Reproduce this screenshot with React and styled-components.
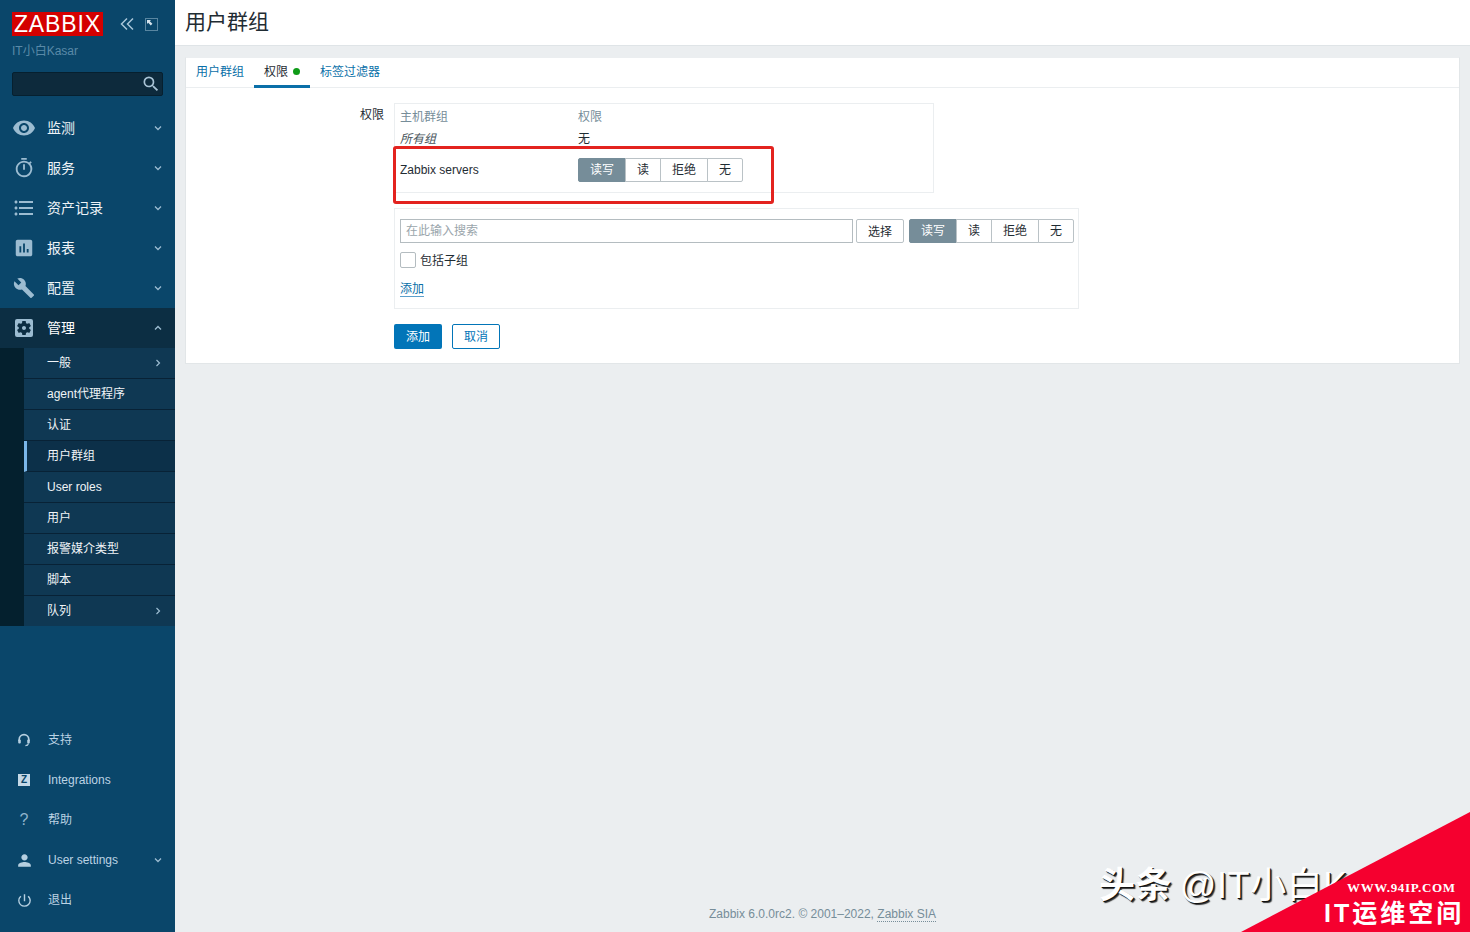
import React from "react";
import styled, { createGlobalStyle } from "styled-components";
import {
  MdVisibility,
  MdOutlineTimer,
  MdFormatListBulleted,
  MdAssessment,
  MdBuild,
  MdSettingsApplications,
  MdPerson,
  MdPowerSettingsNew,
  MdSearch,
} from "react-icons/md";

const FONT = `"Liberation Sans", Arial, "Noto Sans CJK SC", sans-serif`;

const Global = createGlobalStyle`
  html, body { margin: 0; padding: 0; height: 100%; }
  body { font-family: ${FONT}; font-size: 12px; line-height: 14px; color: #1f2c33; background: #ebeef0; overflow: hidden; }
  * { box-sizing: border-box; }
`;

const Page = styled.div`
  position: relative;
  display: flex;
  width: 100%;
  height: 100vh;
  overflow: hidden;
`;

const Sidebar = styled.aside`
  flex: 0 0 175px;
  display: flex;
  flex-direction: column;
  background: #0a466a;
  color: #f2f2f2;
  padding-bottom: 12px;
`;

const Brand = styled.div`
  display: flex;
  align-items: center;
  padding: 12px 0 0 12px;
  height: 36px;
`;

const Logo = styled.div`
  width: 91px;
  height: 24px;
  background: #d40000;
  color: #fff;
  font-size: 23px;
  line-height: 25px;
  text-align: center;
  letter-spacing: 0.9px;
`;

const BrandTools = styled.div`
  display: flex;
  align-items: center;
  gap: 11px;
  margin-left: 17px;
  color: #a9c6d9;
`;

const ServerName = styled.div`
  padding: 8px 0 0 12px;
  height: 24px;
  font-size: 12px;
  line-height: 14px;
  color: #5a8aa8;
`;

const SearchBox = styled.div`
  display: flex;
  align-items: center;
  justify-content: flex-end;
  margin: 12px 12px 12px;
  height: 24px;
  background: #0d2a3c;
  border: 1px solid #06202f;
  border-radius: 2px;
  color: #a9c4d6;
  padding-right: 1px;
  font-size: 20px;
`;

const Nav = styled.nav`
  display: flex;
  flex-direction: column;
`;

const NavRow = styled.div`
  display: flex;
  align-items: center;
  height: 40px;
  flex: 0 0 40px;
  background: ${(p) => (p.$open ? "#0c2e43" : "transparent")};
  color: ${(p) => (p.$open ? "#ffffff" : "#eef3f7")};
  font-size: 14px;
`;

const NavIcon = styled.span`
  flex: 0 0 47px;
  display: flex;
  justify-content: center;
  font-size: 24px;
  color: #9cbcd1;
  svg { display: block; }
`;

const NavText = styled.span`
  flex: 1;
`;

const Chevron = styled.svg`
  width: 8px;
  height: 6px;
  margin-right: 13px;
  fill: none;
  stroke: #9cbcd1;
  stroke-width: 1.3;
`;

const SubWrap = styled.div`
  padding-left: 24px;
  background: #04202e;
`;

const SubRow = styled.div`
  display: flex;
  align-items: center;
  height: 31px;
  padding-left: ${(p) => (p.$active ? "20px" : "23px")};
  border-left: ${(p) => (p.$active ? "3px solid #7ab6e8" : "0")};
  background: ${(p) => (p.$active ? "#0c3049" : "#0f3853")};
  border-bottom: 1px solid #082236;
  font-size: 12px;
  color: #f0f4f7;
  &:last-child { border-bottom: 0; height: 30px; }
`;

const SubText = styled.span`
  flex: 1;
`;

const SubChevron = styled.svg`
  width: 6px;
  height: 8px;
  margin-right: 14px;
  fill: none;
  stroke: #9cbcd1;
  stroke-width: 1.2;
`;

const Utility = styled.div`
  margin-top: auto;
  display: flex;
  flex-direction: column;
`;

const UtilRow = styled.div`
  display: flex;
  align-items: center;
  height: 40px;
  font-size: 12px;
  color: #bcd3e4;
`;

const UtilIcon = styled.span`
  flex: 0 0 48px;
  display: flex;
  justify-content: center;
  font-size: 18px;
  color: #b5cfe0;
  svg { display: block; }
`;

const ZBadge = styled.span`
  width: 12px;
  height: 12px;
  background: #c5d9e7;
  color: #0a466a;
  font-size: 10px;
  font-weight: 700;
  line-height: 12px;
  text-align: center;
`;

const Question = styled.span`
  font-size: 16px;
  line-height: 18px;
  color: #8fb4cc;
`;

const Main = styled.main`
  flex: 1;
  min-width: 0;
  display: flex;
  flex-direction: column;
`;

const Header = styled.header`
  height: 46px;
  flex: 0 0 46px;
  background: #fff;
  border-bottom: 1px solid #dfe4e7;
  padding: 9px 0 0 10px;
`;

const Title = styled.h1`
  margin: 0;
  font-size: 21px;
  line-height: 26px;
  font-weight: 400;
  color: #1f2c33;
`;

const Content = styled.div`
  flex: 1;
  display: flex;
  flex-direction: column;
  padding: 11px 10px 11px 10px;
`;

const Card = styled.section`
  background: #fff;
  border: 1px solid #e2e6e8;
  border-top-color: #ebeef0;
  height: 307px;
`;

const Tabs = styled.div`
  display: flex;
  height: 30px;
  border-bottom: 1px solid #ebeef0;
`;

const Tab = styled.div`
  display: flex;
  align-items: center;
  gap: 5px;
  height: 30px;
  padding: 0 10px;
  font-size: 12px;
  color: ${(p) => (p.$active ? "#1f2c33" : "#0a6fa8")};
  border-bottom: 3px solid ${(p) => (p.$active ? "#0a6fa8" : "transparent")};
`;

const Dot = styled.span`
  width: 7px;
  height: 7px;
  border-radius: 50%;
  background: #0f9b18;
`;

const FormGrid = styled.div`
  display: grid;
  grid-template-columns: 198px 1fr;
  column-gap: 10px;
  padding-top: 15px;
`;

const FieldLabel = styled.div`
  text-align: right;
  font-size: 12px;
  line-height: 14px;
  padding-top: 5px;
`;

const Column = styled.div`
  display: flex;
  flex-direction: column;
`;

const Table = styled.div`
  width: 540px;
  height: 90px;
  border: 1px solid #ebeef0;
  padding: 0 5px;
  display: grid;
  grid-template-columns: 178px 1fr;
  grid-template-rows: 25px 20px 42px;
  align-items: center;
`;

const HeadCell = styled.div`
  color: #768d99;
  font-size: 12px;
`;

const Cell = styled.div`
  font-size: 12px;
  font-style: ${(p) => (p.$italic ? "italic" : "normal")};
  color: ${(p) => (p.$italic ? "#47545b" : "#1f2c33")};
`;

const Segments = styled.div`
  display: inline-flex;
  height: 24px;
`;

const Segment = styled.div`
  display: flex;
  align-items: center;
  justify-content: center;
  width: ${(p) => p.$w}px;
  height: 24px;
  margin-left: -1px;
  font-size: 12px;
  background: ${(p) => (p.$on ? "#768d99" : "#fff")};
  color: ${(p) => (p.$on ? "#fff" : "#1f2c33")};
  border: 1px solid ${(p) => (p.$on ? "#768d99" : "#bac2c6")};
  &:first-child { margin-left: 0; border-radius: 2px 0 0 2px; }
  &:last-child { border-radius: 0 2px 2px 0; }
`;

const AddBox = styled.div`
  width: 685px;
  height: 101px;
  margin-top: 15px;
  border: 1px solid #ebeef0;
  padding: 10px 5px 0;
  display: flex;
  flex-direction: column;
  align-items: flex-start;
`;

const AddRow = styled.div`
  display: flex;
  align-items: center;
`;

const SearchInput = styled.div`
  width: 453px;
  height: 24px;
  border: 1px solid #b4bcc0;
  padding-left: 5px;
  line-height: 22px;
  font-size: 12px;
  color: #9aa5ab;
`;

const SelectButton = styled.div`
  width: 48px;
  height: 24px;
  margin: 0 5px 0 3px;
  border: 1px solid #bac2c6;
  border-radius: 2px;
  text-align: center;
  line-height: 24px;
  font-size: 12px;
`;

const CheckRow = styled.label`
  display: flex;
  align-items: center;
  gap: 4px;
  margin-top: 9px;
  font-size: 12px;
`;

const CheckBox = styled.span`
  width: 16px;
  height: 16px;
  border: 1px solid #b4bcc0;
  border-radius: 2px;
  background: #fff;
`;

const CheckText = styled.span`
  padding-top: 2px;
`;

const AddLink = styled.span`
  margin-top: 14px;
  font-size: 12px;
  line-height: 14px;
  color: #0a6fa8;
  border-bottom: 1px solid #5b9fcb;
`;

const Actions = styled.div`
  display: flex;
  gap: 10px;
  margin-top: 15px;
`;

const PrimaryButton = styled.div`
  width: 48px;
  height: 25px;
  border-radius: 2px;
  background: #0275b8;
  color: #fff;
  text-align: center;
  line-height: 27px;
  font-size: 12px;
`;

const SecondaryButton = styled.div`
  width: 48px;
  height: 25px;
  border-radius: 2px;
  border: 1px solid #0275b8;
  color: #0275b8;
  text-align: center;
  line-height: 25px;
  font-size: 12px;
`;

const Footer = styled.footer`
  margin-top: auto;
  text-align: center;
  font-size: 12px;
  line-height: 14px;
  color: #768d99;
`;

const FooterLink = styled.span`
  border-bottom: 1px dotted #768d99;
`;

const Annotation = styled.div`
  position: absolute;
  left: 393px;
  top: 146px;
  width: 381px;
  height: 58px;
  border: 3px solid #e3231f;
  border-radius: 3px;
  pointer-events: none;
`;

const WatermarkText = styled.div`
  position: absolute;
  left: 1099px;
  top: 864px;
  font-size: 36px;
  line-height: 44px;
  white-space: nowrap;
  letter-spacing: 0.6px;
  word-spacing: -3px;
  color: #fff;
  text-shadow: 1px 1px 0 #111, 2px 2px 1px #333;
`;

const WatermarkBrand = styled.span`
  font-weight: 700;
`;

const Ribbon = styled.div`
  position: absolute;
  left: 1241px;
  top: 812px;
  width: 229px;
  height: 120px;
  background: #f5002f;
  clip-path: polygon(0 100%, 100% 0, 100% 100%);
`;

const RibbonUrl = styled.div`
  position: absolute;
  left: 1347px;
  top: 880px;
  font-family: "Liberation Serif", "Times New Roman", serif;
  font-weight: 700;
  font-size: 13px;
  line-height: 15px;
  letter-spacing: 0.65px;
  color: #fff;
`;

const RibbonTitle = styled.div`
  position: absolute;
  left: 1324px;
  top: 897px;
  font-weight: 700;
  font-size: 25px;
  line-height: 32px;
  letter-spacing: 3px;
  white-space: nowrap;
  color: #fff;
`;

const Down = () => (
  <Chevron viewBox="0 0 8 6">
    <path d="M1 1.5 L4 4.5 L7 1.5" />
  </Chevron>
);
const Up = () => (
  <Chevron viewBox="0 0 8 6">
    <path d="M1 4.5 L4 1.5 L7 4.5" />
  </Chevron>
);
const Right = () => (
  <SubChevron viewBox="0 0 6 8">
    <path d="M1.5 1 L4.5 4 L1.5 7" />
  </SubChevron>
);

const Collapse = () => (
  <svg width="14" height="14" viewBox="0 0 14 14" fill="none" stroke="currentColor" strokeWidth="1.5">
    <path d="M7 1.5 L1.5 7 L7 12.5" />
    <path d="M13 1.5 L7.5 7 L13 12.5" />
  </svg>
);

const Expand = () => (
  <svg width="13" height="13" viewBox="0 0 13 13" fill="none">
    <rect x="0.5" y="0.5" width="12" height="12" stroke="#a9c6d9" strokeDasharray="1 1" />
    <path d="M2 2 H6 L4.8 3.2 L7.4 5.8 L5.8 7.4 L3.2 4.8 L2 6 Z" fill="#d5e3ec" />
  </svg>
);

const Headset = () => (
  <svg width="14" height="14" viewBox="0 0 14 14" fill="none">
    <path d="M2.2 8 V6.4 A4.8 4.8 0 0 1 11.8 6.4 V8" stroke="#b5cfe0" strokeWidth="1.7" />
    <rect x="1.2" y="6.6" width="2.6" height="4" rx="1" fill="#b5cfe0" />
    <rect x="10.2" y="6.6" width="2.6" height="4" rx="1" fill="#b5cfe0" />
    <path d="M11.5 10.5 Q11 12.6 8.4 12.6" stroke="#b5cfe0" strokeWidth="1.1" />
  </svg>
);

const navItems = [
  ["监测", <MdVisibility size={24} />],
  ["服务", <MdOutlineTimer size={22} />],
  ["资产记录", <MdFormatListBulleted size={24} />],
  ["报表", <MdAssessment size={22} />],
  ["配置", <MdBuild size={22} />],
];

const subItems = [
  { t: "一般", more: true },
  { t: "agent代理程序" },
  { t: "认证" },
  { t: "用户群组", active: true },
  { t: "User roles" },
  { t: "用户" },
  { t: "报警媒介类型" },
  { t: "脚本" },
  { t: "队列", more: true },
];

const levels = [
  ["读写", 48, true],
  ["读", 36, false],
  ["拒绝", 48, false],
  ["无", 36, false],
];

const PermissionSegments = () => (
  <Segments>
    {levels.map(([t, w, on]) => (
      <Segment key={t} $w={w} $on={on}>
        {t}
      </Segment>
    ))}
  </Segments>
);

export default function App() {
  return (
    <Page>
      <Global />
      <Sidebar>
        <Brand>
          <Logo>ZABBIX</Logo>
          <BrandTools>
            <Collapse />
            <Expand />
          </BrandTools>
        </Brand>
        <ServerName>IT小白Kasar</ServerName>
        <SearchBox>
          <MdSearch />
        </SearchBox>
        <Nav>
          {navItems.map(([t, icon]) => (
            <NavRow key={t}>
              <NavIcon>{icon}</NavIcon>
              <NavText>{t}</NavText>
              <Down />
            </NavRow>
          ))}
          <NavRow $open>
            <NavIcon>
              <MdSettingsApplications size={24} />
            </NavIcon>
            <NavText>管理</NavText>
            <Up />
          </NavRow>
          <SubWrap>
            {subItems.map((s) => (
              <SubRow key={s.t} $active={s.active}>
                <SubText>{s.t}</SubText>
                {s.more && <Right />}
              </SubRow>
            ))}
          </SubWrap>
        </Nav>
        <Utility>
          <UtilRow>
            <UtilIcon>
              <Headset />
            </UtilIcon>
            <NavText>支持</NavText>
          </UtilRow>
          <UtilRow>
            <UtilIcon>
              <ZBadge>Z</ZBadge>
            </UtilIcon>
            <NavText>Integrations</NavText>
          </UtilRow>
          <UtilRow>
            <UtilIcon>
              <Question>?</Question>
            </UtilIcon>
            <NavText>帮助</NavText>
          </UtilRow>
          <UtilRow>
            <UtilIcon>
              <MdPerson size={19} />
            </UtilIcon>
            <NavText>User settings</NavText>
            <Down />
          </UtilRow>
          <UtilRow>
            <UtilIcon>
              <MdPowerSettingsNew size={17} />
            </UtilIcon>
            <NavText>退出</NavText>
          </UtilRow>
        </Utility>
      </Sidebar>
      <Main>
        <Header>
          <Title>用户群组</Title>
        </Header>
        <Content>
          <Card>
            <Tabs>
              <Tab>用户群组</Tab>
              <Tab $active>
                权限 <Dot />
              </Tab>
              <Tab>标签过滤器</Tab>
            </Tabs>
            <FormGrid>
              <FieldLabel>权限</FieldLabel>
              <Column>
                <Table>
                  <HeadCell>主机群组</HeadCell>
                  <HeadCell>权限</HeadCell>
                  <Cell $italic>所有组</Cell>
                  <Cell>无</Cell>
                  <Cell>Zabbix servers</Cell>
                  <PermissionSegments />
                </Table>
                <AddBox>
                  <AddRow>
                    <SearchInput>在此输入搜索</SearchInput>
                    <SelectButton>选择</SelectButton>
                    <PermissionSegments />
                  </AddRow>
                  <CheckRow>
                    <CheckBox />
                    <CheckText>包括子组</CheckText>
                  </CheckRow>
                  <AddLink>添加</AddLink>
                </AddBox>
                <Actions>
                  <PrimaryButton>添加</PrimaryButton>
                  <SecondaryButton>取消</SecondaryButton>
                </Actions>
              </Column>
            </FormGrid>
          </Card>
          <Footer>
            Zabbix 6.0.0rc2. © 2001–2022, <FooterLink>Zabbix SIA</FooterLink>
          </Footer>
        </Content>
      </Main>
      <Annotation />
      <WatermarkText>
        <WatermarkBrand>头条</WatermarkBrand> @IT小白K
      </WatermarkText>
      <Ribbon />
      <RibbonUrl>WWW.94IP.COM</RibbonUrl>
      <RibbonTitle>IT运维空间</RibbonTitle>
    </Page>
  );
}
